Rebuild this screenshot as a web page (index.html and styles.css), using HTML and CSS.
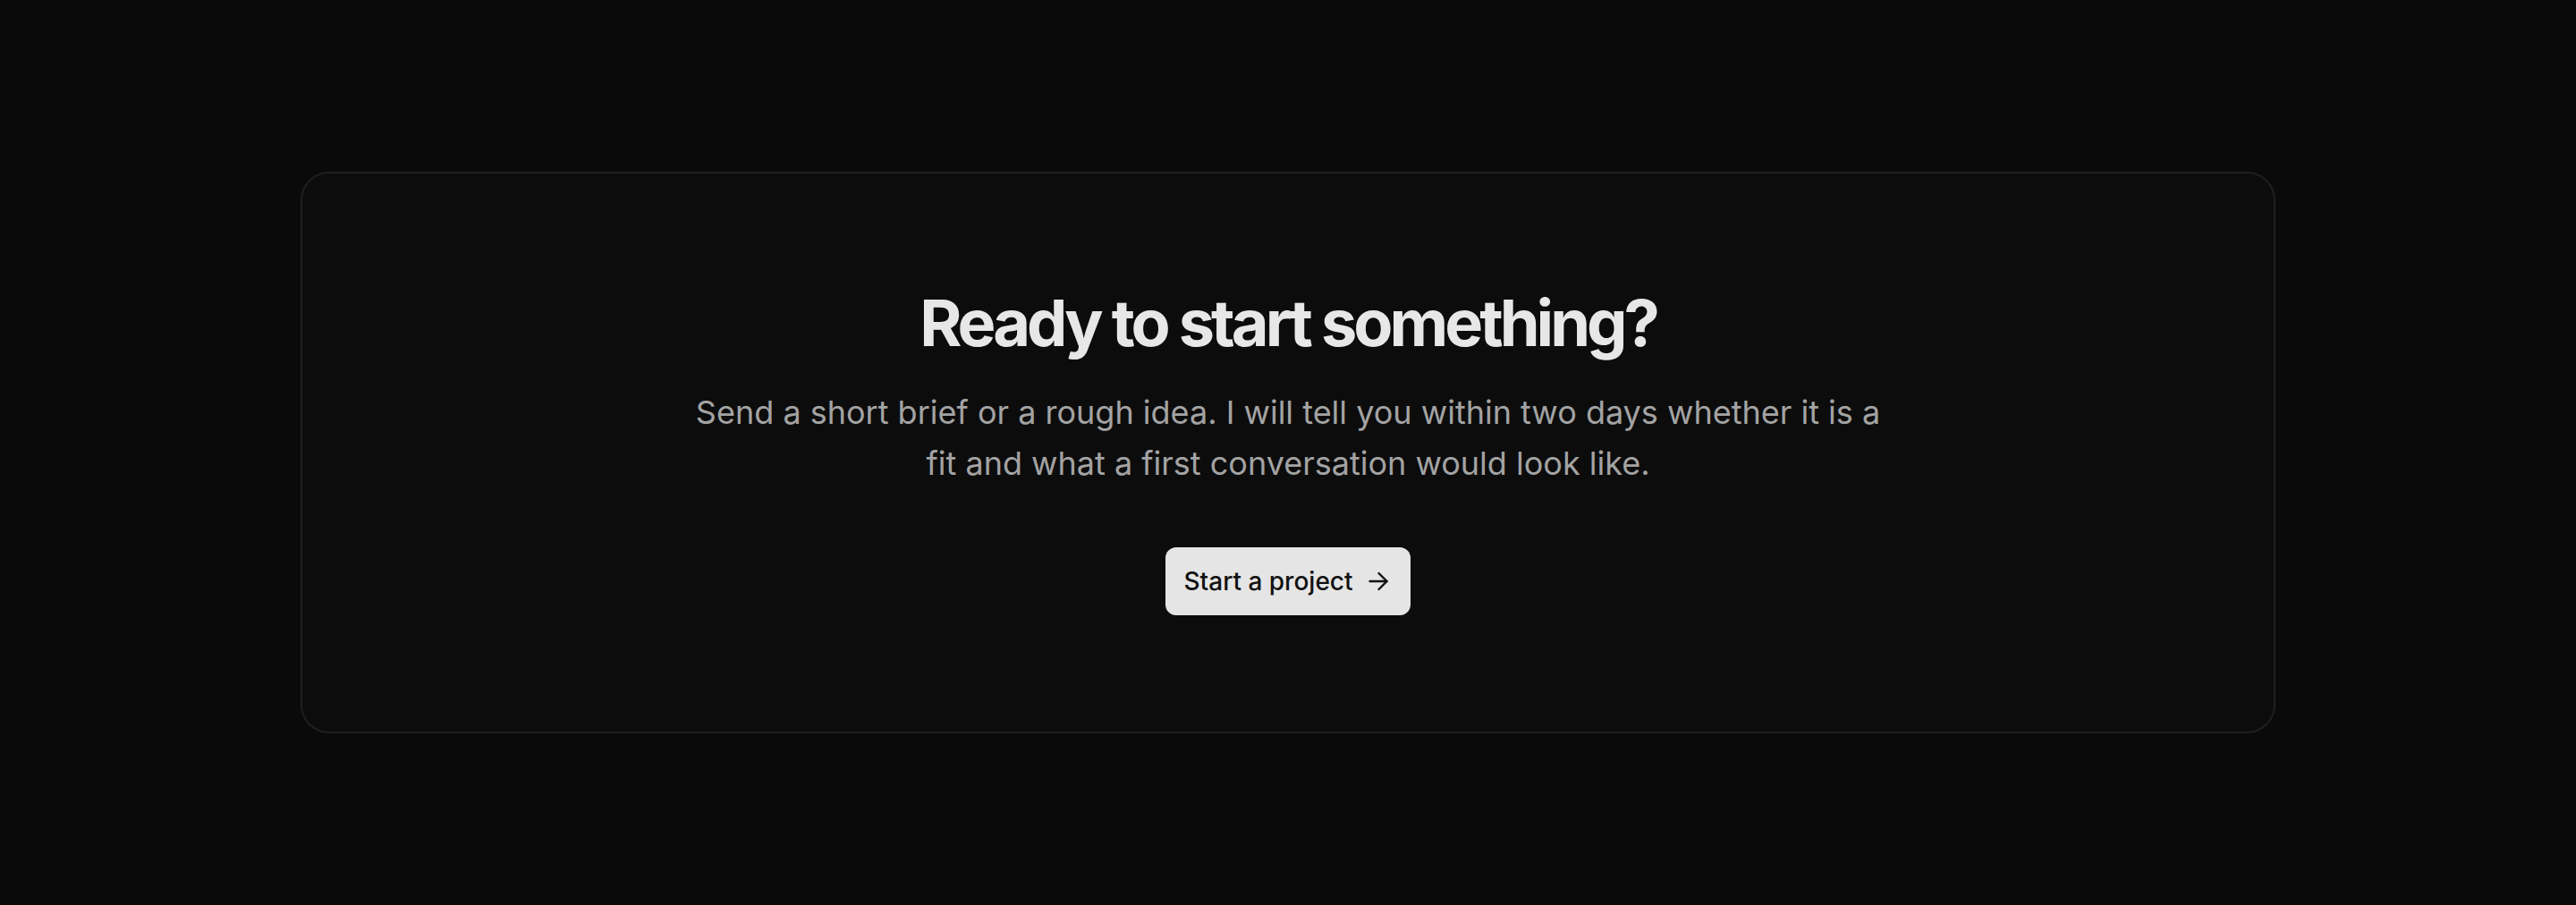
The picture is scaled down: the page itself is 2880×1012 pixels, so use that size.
FILE: index.html
```html
<!DOCTYPE html>
<html lang="en">
<head>
    <meta charset="UTF-8">
    <meta name="viewport" content="width=device-width, initial-scale=1.0">
    <title>Start a project</title>
    <link rel="stylesheet" href="styles.css">
</head>
<body>
    <!-- Call to action -->
    <section class="cta">
        <h2>Ready to start something?</h2>
        <p>Send a short brief or a rough idea. I will tell you within two days whether it is a fit and what a first conversation would look like.</p>
        <a class="cta-button" href="#contact">
            Start a project
            <svg width="22" height="22" viewBox="0 0 22 22" fill="none" stroke="currentColor" stroke-width="2.4" stroke-linecap="round" stroke-linejoin="round">
                <path d="M1.5 11h19"/>
                <path d="M11.5 2l9 9-9 9"/>
            </svg>
        </a>
    </section>
</body>
</html>
```

FILE: styles.css
```css
/* Colores */
:root {
    --bg: #0a0a0a;
    --card-bg: #0c0c0c;
    --border: #1f1f1f;
    --heading: #e7e7e7;
    --muted: #a3a3a3;
    --button-bg: #e5e5e5;
    --button-text: #111111;
}

body {
    margin: 0;
    min-height: 100vh;
    background-color: var(--bg);
    font-family: Inter, "Noto Sans", sans-serif;
    display: flex;
    align-items: center;
    justify-content: center;
}

/* Tarjeta principal */
.cta {
    width: 2208px;
    box-sizing: border-box;
    padding: 127px 40px 130px;
    background-color: var(--card-bg);
    border: 2px solid var(--border);
    border-radius: 32px;
    display: flex;
    flex-direction: column;
    align-items: center;
    text-align: center;
}

.cta h2 {
    margin: 0;
    font-size: 72px;
    font-weight: 700;
    line-height: 1.1;
    letter-spacing: -0.055em;
    color: var(--heading);
}

.cta p {
    margin: 32px 0 0;
    max-width: 1345px;
    font-size: 36px;
    line-height: 1.6;
    color: var(--muted);
}

.cta-button {
    margin-top: 64px;
    display: inline-flex;
    align-items: center;
    gap: 17px;
    height: 76px;
    box-sizing: border-box;
    padding: 0 25px 0 20px;
    background-color: var(--button-bg);
    color: var(--button-text);
    border-radius: 12px;
    font-size: 28px;
    font-weight: 500;
    text-decoration: none;
}
```
